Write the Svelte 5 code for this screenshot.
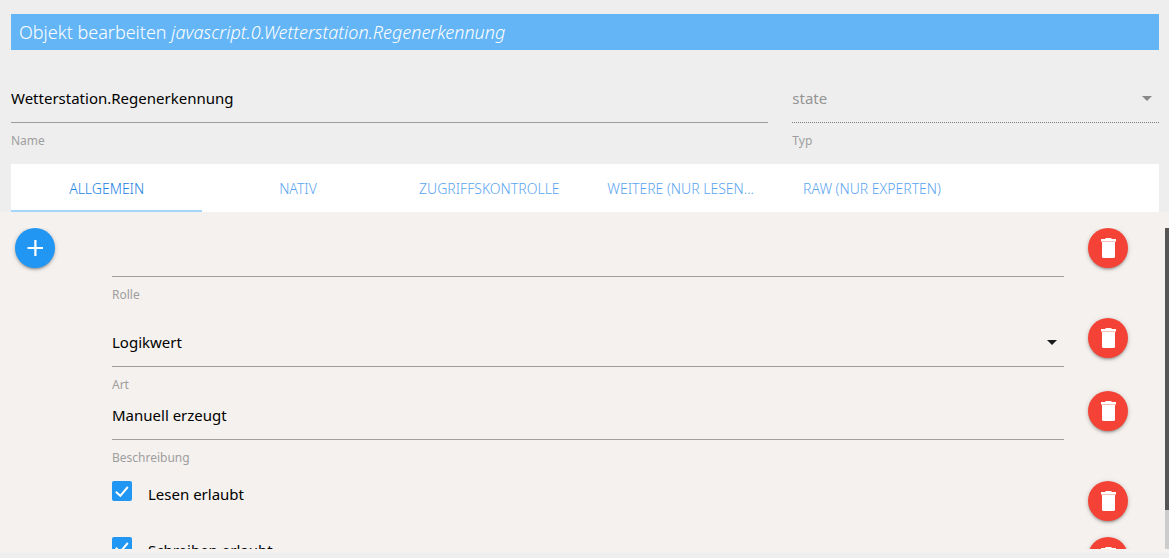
<script>
  const tabs = ['Allgemein', 'Nativ', 'Zugriffskontrolle', 'Weitere (nur lesen...', 'Raw (nur Experten)'];
  let active = $state(0);
  let name = $state('Wetterstation.Regenerkennung');
  let role = $state('');
  let description = $state('Manuell erzeugt');
  let readable = $state(true);
  let writable = $state(true);
</script>

{#snippet trash()}
  <button class="round delete" type="button" aria-label="Löschen">
    <svg viewBox="0 0 24 24" width="24" height="24" aria-hidden="true">
      <path d="M5 3h4l1-1h5l1 1h4v2H5z" />
      <path d="M5 5h15v1H5z" opacity="0.65" />
      <path d="M6 6h13v14.500q0 1.500-1.500 1.500h-10q-1.500 0-1.500-1.500z" />
    </svg>
  </button>
{/snippet}

{#snippet check()}
  <svg class="tick" viewBox="0 0 20 20" width="20" height="20" aria-hidden="true">
    <path d="M3.800 10.800l4.500 4L15.800 6" />
  </svg>
{/snippet}

<div class="dialog">
  <h1>Objekt bearbeiten <em>javascript.0.Wetterstation.Regenerkennung</em></h1>

  <div class="head">
    <div class="field wide">
      <input id="name" type="text" bind:value={name} />
      <label for="name">Name</label>
    </div>
    <div class="field narrow">
      <div class="select">
        <select id="type" disabled><option>state</option></select>
        <svg viewBox="0 0 24 24" width="24" height="24" aria-hidden="true"><path d="M7 9l5 5 5-5z" /></svg>
      </div>
      <label for="type">Typ</label>
    </div>
  </div>

  <div class="tabs" role="tablist">
    {#each tabs as tab, i}
      <button type="button" role="tab" class:active={active === i} aria-selected={active === i} onclick={() => (active = i)}>{tab}</button>
    {/each}
  </div>

  <div class="panel">
    <div class="scroller">
      <button class="round add" type="button" aria-label="Hinzufügen">
        <svg viewBox="0 0 24 24" width="24" height="24" aria-hidden="true"><path d="M11.300 4h2.200v7H20v2h-6.500v7h-2.200v-7H4.500v-2h6.800z" /></svg>
      </button>
      <div class="rows">
        <div class="row tall">
          <div class="field">
            <input id="role" type="text" bind:value={role} />
            <label for="role">Rolle</label>
          </div>
          {@render trash()}
        </div>
        <div class="row">
          <div class="field">
            <div class="select">
              <select id="kind"><option>Logikwert</option></select>
              <svg viewBox="0 0 24 24" width="24" height="24" aria-hidden="true"><path d="M7 9l5 5 5-5z" /></svg>
            </div>
            <label for="kind">Art</label>
          </div>
          {@render trash()}
        </div>
        <div class="row tall">
          <div class="field">
            <input id="desc" type="text" bind:value={description} />
            <label for="desc">Beschreibung</label>
          </div>
          {@render trash()}
        </div>
        <div class="row short">
          <label class="check"><input type="checkbox" bind:checked={readable} />{@render check()}<span>Lesen erlaubt</span></label>
          {@render trash()}
        </div>
        <div class="row short">
          <label class="check"><input type="checkbox" bind:checked={writable} />{@render check()}<span>Schreiben erlaubt</span></label>
          {@render trash()}
        </div>
      </div>
    </div>
    <div class="track"><div class="thumb"></div></div>
  </div>
</div>

<style>
  :global(body) {
    margin: 0;
    background: #eeeeee;
  }
  .dialog,
  .dialog * {
    box-sizing: border-box;
  }
  .dialog {
    display: flex;
    flex-direction: column;
    height: 100vh;
    padding: 14px 0 5px;
    font-family: 'Noto Sans', 'Open Sans', sans-serif;
    font-size: 15px;
    font-weight: 370;
    color: #000;
  }
  button, input, select {
    font: inherit;
    color: inherit;
    margin: 0;
    padding: 0;
    border: 0;
    border-radius: 0;
    background: none;
  }
  button {
    cursor: pointer;
  }
  h1 {
    margin: 0 10px 0 11px;
    padding: 1px 8px 0;
    background: #64b5f6;
    color: #fff;
    font-size: 18px;
    font-weight: 340;
    line-height: 35px;
    white-space: nowrap;
  }
  .head {
    display: grid;
    grid-template-columns: repeat(12, minmax(0, 1fr));
    column-gap: 24px;
    padding: 24px 10px 0 11px;
    height: 114px;
    flex: none;
  }
  .wide {
    grid-column: span 8;
  }
  .narrow {
    grid-column: span 4;
  }
  .field {
    min-width: 0;
  }
  .field input,
  .field select {
    display: block;
    width: 100%;
    height: 49px;
    border-bottom: 1px solid #9e9e9e;
    outline: none;
    appearance: none;
  }
  .field select:disabled {
    border-bottom: 1px dotted #808080;
    color: #949494;
    opacity: 1;
  }
  .field label {
    display: block;
    margin-top: 9px;
    color: #9e9e9e;
    font-size: 12px;
    line-height: 18px;
  }
  .select {
    display: grid;
    align-items: center;
  }
  .select > * {
    grid-area: 1 / 1;
  }
  .select svg {
    justify-self: end;
    pointer-events: none;
    fill: #1c1c1c;
  }
  .narrow .select svg {
    fill: #888;
  }
  .tabs {
    display: grid;
    grid-template-columns: repeat(6, minmax(0, 1fr));
    flex: none;
    height: 48px;
    margin: 0 10px 0 11px;
    background: #fff;
  }
  .tabs button {
    border-bottom: 2px solid transparent;
    padding-top: 2px;
    color: #5aa5f0;
    font-size: 14px;
    font-weight: 300;
    text-transform: uppercase;
    white-space: nowrap;
  }
  .tabs button.active {
    color: #1a82e2;
    border-color: #a6d5fa;
  }
  .panel {
    display: flex;
    flex: 1;
    min-height: 0;
    padding: 16px 0 4px;
    background: #f5f1ee;
  }
  .scroller {
    display: flex;
    flex: 1;
    gap: 57px;
    min-width: 0;
    padding: 0 37px 0 15px;
    overflow: hidden auto;
    scrollbar-width: none;
  }
  .track {
    width: 4px;
    background: #ccc;
  }
  .thumb {
    height: 88%;
    background: #555;
  }
  .rows {
    flex: 1;
    min-width: 0;
  }
  .row {
    display: grid;
    grid-template-columns: minmax(0, 1fr) 40px;
    column-gap: 24px;
    align-items: start;
    height: 73px;
  }
  .row.tall {
    height: 90px;
  }
  .row.short {
    height: 56px;
  }
  .round {
    display: grid;
    place-items: center;
    flex: none;
    width: 40px;
    height: 40px;
    border-radius: 50%;
    background: #2196f3;
    box-shadow: 0 2px 2px rgba(0, 0, 0, 0.14), 0 3px 1px -2px rgba(0, 0, 0, 0.12), 0 1px 5px rgba(0, 0, 0, 0.2);
  }
  .round svg {
    fill: #fff;
  }
  .round.delete {
    background: #f44336;
  }
  .check {
    display: grid;
    grid-template-columns: 20px auto;
    column-gap: 16px;
    justify-content: start;
  }
  .check input {
    grid-area: 1 / 1;
    width: 20px;
    height: 20px;
    border: 2px solid #757575;
    border-radius: 2px;
    appearance: none;
  }
  .check input:checked {
    border-color: #2196f3;
    background: #2196f3;
  }
  .tick {
    grid-area: 1 / 1;
    fill: none;
    stroke: #fff;
    stroke-width: 2;
    pointer-events: none;
  }
  .check input:not(:checked) + .tick {
    visibility: hidden;
  }
  .check span {
    line-height: 26px;
  }
</style>
